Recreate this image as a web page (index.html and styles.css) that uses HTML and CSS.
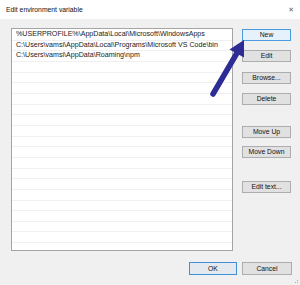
FILE: index.html
```html
<!DOCTYPE html>
<html>
<head>
<meta charset="utf-8">
<link rel="stylesheet" href="styles.css">
</head>
<body>
<div class="dialog">
  <div class="titlebar">
    <span class="title">Edit environment variable</span>
    <span class="close">✕</span>
  </div>
  <div class="content">
    <div class="main">
      <div class="list">
        <div class="row">%USERPROFILE%\AppData\Local\Microsoft\WindowsApps</div>
        <div class="row">C:\Users\vamsi\AppData\Local\Programs\Microsoft VS Code\bin</div>
        <div class="row">C:\Users\vamsi\AppData\Roaming\npm</div>
        <div class="row"></div><div class="row"></div><div class="row"></div>
        <div class="row"></div><div class="row"></div><div class="row"></div>
        <div class="row"></div><div class="row"></div><div class="row"></div>
        <div class="row"></div><div class="row"></div><div class="row"></div>
        <div class="row"></div><div class="row"></div><div class="row"></div>
        <div class="row"></div><div class="row"></div><div class="row"></div>
      </div>
      <div class="side">
        <button class="btn hot">New</button>
        <button class="btn b-edit">Edit</button>
        <button class="btn b-browse">Browse...</button>
        <button class="btn b-delete">Delete</button>
        <button class="btn b-up">Move Up</button>
        <button class="btn b-down">Move Down</button>
        <button class="btn b-text">Edit text...</button>
      </div>
    </div>
    <div class="footer">
      <button class="btn default ok">OK</button>
      <button class="btn cancel">Cancel</button>
    </div>
  </div>
  <span class="grip"></span>
  <svg class="arrow" width="300" height="285" viewBox="0 0 300 285">
    <line x1="213" y1="94" x2="237" y2="53" stroke="#2d2b94" stroke-width="5.5" stroke-linecap="round"/>
    <polygon points="244,40 244,57.5 229.5,49.5" fill="#2d2b94"/>
  </svg>
</div>
</body>
</html>
```
FILE: styles.css
```css
* { box-sizing: border-box; }
html, body { margin: 0; padding: 0; }
body {
  width: 300px;
  height: 285px;
  overflow: hidden;
  background: #f0f0f0;
  font-family: "Liberation Sans", Arial, sans-serif;
  color: #000;
}
.dialog {
  position: relative;
  width: 300px;
  height: 285px;
  display: flex;
  flex-direction: column;
}
.titlebar {
  height: 19px;
  background: #fff;
  display: flex;
  align-items: center;
  justify-content: space-between;
  padding: 0 6px 0 6px;
}
.title {
  font-size: 6.8px;
  color: #111;
}
.close {
  font-family: "DejaVu Sans", sans-serif;
  font-size: 7px;
  color: #666;
  margin-top: 1px;
}
.content {
  padding: 9px 0 0 11px;
  display: flex;
  flex-direction: column;
}
.main {
  display: flex;
  gap: 9px;
}
.list {
  width: 222px;
  height: 223px;
  background: #fff;
  border: 1px solid #a5a5a5;
  padding-top: 1px;
  overflow: hidden;
}
.row {
  height: 10.67px;
  border-bottom: 1px solid #f0f0f0;
  padding-left: 4px;
  font-size: 7.1px;
  line-height: 8px;
  white-space: nowrap;
  color: #1a1a1a;
}
.side {
  display: flex;
  flex-direction: column;
  padding-top: 1px;
}
.btn {
  width: 49px;
  height: 12px;
  padding: 0;
  margin: 0;
  background: #e1e1e1;
  border: 1px solid #adadad;
  font-family: inherit;
  font-size: 6.8px;
  line-height: 10px;
  color: #111;
  text-align: center;
}
.hot {
  background: #e5f1fb;
  border-color: #4a9be0;
}
.b-edit { margin-top: 9px; }
.b-browse { margin-top: 10px; }
.b-delete { margin-top: 9px; }
.b-up { margin-top: 21px; }
.b-down { margin-top: 8px; }
.b-text { margin-top: 23px; }
.footer {
  display: flex;
  justify-content: flex-end;
  gap: 5px;
  padding-right: 8px;
  margin-top: 11px;
}
.footer .btn { height: 13px; line-height: 11px; }
.ok {
  width: 48px;
  border-color: #3c8fd8;
  background: #e3e9ef;
}
.cancel { width: 50px; }
.grip {
  position: absolute;
  right: 2px;
  bottom: 2px;
  width: 3px;
  height: 3px;
  border-right: 1px dotted #aaa;
  border-bottom: 1px dotted #aaa;
}
.arrow {
  position: absolute;
  left: 0;
  top: 0;
  pointer-events: none;
}
```
